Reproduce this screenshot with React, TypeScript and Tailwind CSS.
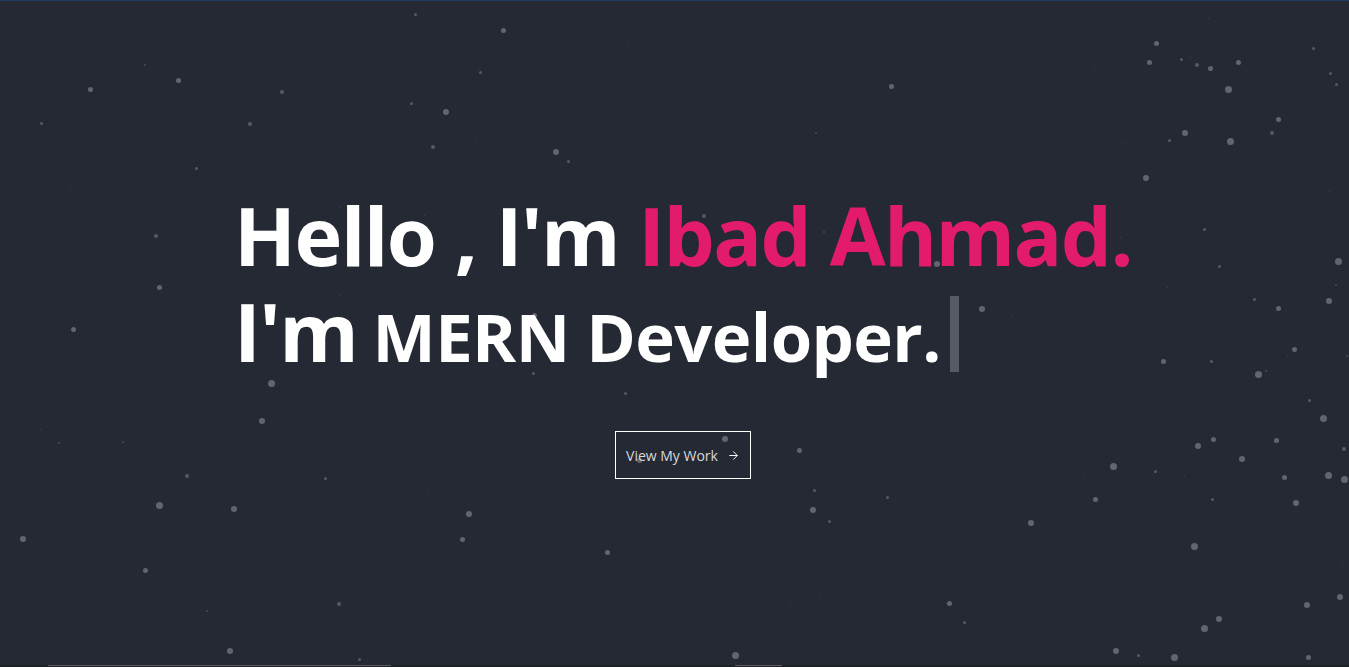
import React from "react";
import { ArrowRight } from "lucide-react";

// particle field: [x, y, diameter]
const dots: [number, number, number][] = [
  [415, 14, 3], [503, 30, 5], [145, 65, 2], [178, 80, 5], [90, 89, 5], [282, 92, 4],
  [480, 72, 3], [411, 103, 3], [446, 112, 6], [41, 123, 3], [250, 124, 4], [433, 147, 4],
  [556, 152, 6], [568, 161, 3], [196, 168, 3], [70, 186, 1], [628, 42, 1], [645, 138, 1],
  [476, 138, 1], [156, 236, 4], [159, 287, 5], [73, 329, 5], [534, 315, 5], [339, 207, 1],
  [424, 215, 1], [340, 295, 1],
  [1208, 18, 1], [1156, 43, 5], [1149, 62, 5], [1181, 59, 3], [1190, 57, 1], [1197, 65, 4],
  [1210, 68, 5], [1238, 62, 5], [1313, 48, 3], [1330, 73, 3], [1336, 84, 3], [1094, 69, 1],
  [1228, 89, 7], [891, 86, 5], [816, 133, 2], [1278, 119, 5], [1272, 133, 4], [1185, 133, 6],
  [1169, 140, 3], [1230, 141, 7], [1125, 142, 1], [1146, 178, 6], [1329, 191, 1], [1204, 229, 3],
  [704, 216, 4], [824, 232, 2], [1120, 237, 1], [1338, 261, 7], [1219, 266, 3], [937, 264, 6],
  [1336, 285, 2], [1167, 287, 1], [1254, 299, 3], [1278, 308, 5], [1329, 301, 6], [982, 309, 6],
  [1012, 316, 1], [1114, 314, 1], [1314, 306, 1],
  [271, 383, 7], [262, 421, 6], [533, 373, 3], [625, 393, 3], [40, 429, 1], [59, 443, 2],
  [123, 442, 2], [187, 476, 4], [325, 478, 3], [427, 493, 1], [159, 505, 7], [234, 509, 6],
  [469, 514, 6], [23, 539, 6], [462, 539, 5], [607, 552, 5], [639, 460, 5], [145, 570, 5],
  [207, 611, 2], [339, 604, 4], [230, 651, 6], [359, 659, 3],
  [1294, 349, 5], [1163, 361, 5], [1211, 361, 3], [1258, 374, 7], [1266, 371, 2], [1287, 355, 1],
  [1347, 356, 2], [1309, 400, 3], [1323, 418, 7], [725, 439, 6], [799, 450, 5], [1213, 439, 5],
  [1198, 446, 6], [1276, 440, 5], [1344, 449, 4], [1242, 459, 6], [1113, 466, 7], [1155, 471, 3],
  [1083, 474, 1], [1184, 475, 1], [1284, 477, 5], [1328, 475, 7], [1344, 479, 7], [814, 490, 3],
  [887, 497, 3], [1095, 499, 5], [1212, 499, 3], [1296, 503, 6], [813, 510, 6], [829, 521, 3],
  [1031, 523, 6], [1194, 546, 7], [1342, 565, 1], [1340, 597, 6], [1307, 605, 6], [820, 594, 1],
  [790, 605, 1], [949, 603, 5], [964, 622, 3], [1219, 619, 6], [1204, 628, 7], [735, 655, 7],
  [1116, 651, 6], [1138, 655, 3], [1174, 657, 7], [1308, 657, 5],
];

const Particles = () => (
  <div className="absolute inset-0 pointer-events-none">
    {dots.map(([x, y, d], i) => (
      <span
        key={i}
        className={`absolute rounded-full ${d >= 5 ? "bg-[#62656e]" : d >= 3 ? "bg-[#575a64]" : "bg-[#474a54]"}`}
        style={{ left: x - d / 2, top: y - d / 2, width: d, height: d }}
      />
    ))}
  </div>
);

export default function App() {
  return (
    <div className="relative h-[667px] w-full overflow-hidden bg-[#252934] font-['Open_Sans',sans-serif]">
      <div className="absolute top-0 left-0 right-0 h-px bg-[#1d3d63]" />
      <Particles />

      <section className="relative z-10 flex flex-col items-center pt-[187px] pl-[17px]">
        <div className="text-left font-bold text-white tracking-[-1.6px]">
          <h1 className="text-[81px] leading-[96px] whitespace-nowrap">
            Hello , I'm <span className="text-[#e31b6d]">Ibad Ahmad.</span>
          </h1>
          <h2 className="relative text-[81px] leading-[96px] whitespace-nowrap">
            I'm <span className="text-[67px] -ml-[4px] tracking-[-0.6px]">MERN Developer.</span>
            <span className="inline-block w-[9px] h-[76px] bg-[#555a65] align-[-10px] ml-[9px]" />
          </h2>
        </div>

        <button className="mt-[47px] w-[136px] h-[48px] border border-white flex items-center justify-center gap-[9px] text-[14px] text-[#d7d8db] tracking-normal">
          View My Work
          <ArrowRight className="w-[13px] h-[13px] text-white" strokeWidth={1.8} />
        </button>
      </section>

      <div className="absolute bottom-0 left-0 right-0 h-[2px] bg-[#1e2027]">
        <div className="absolute top-0 left-[48px] w-[343px] h-px bg-[#5a5c62]" />
        <div className="absolute top-0 left-[735px] w-[47px] h-px bg-[#5a5c62]" />
      </div>
    </div>
  );
}
